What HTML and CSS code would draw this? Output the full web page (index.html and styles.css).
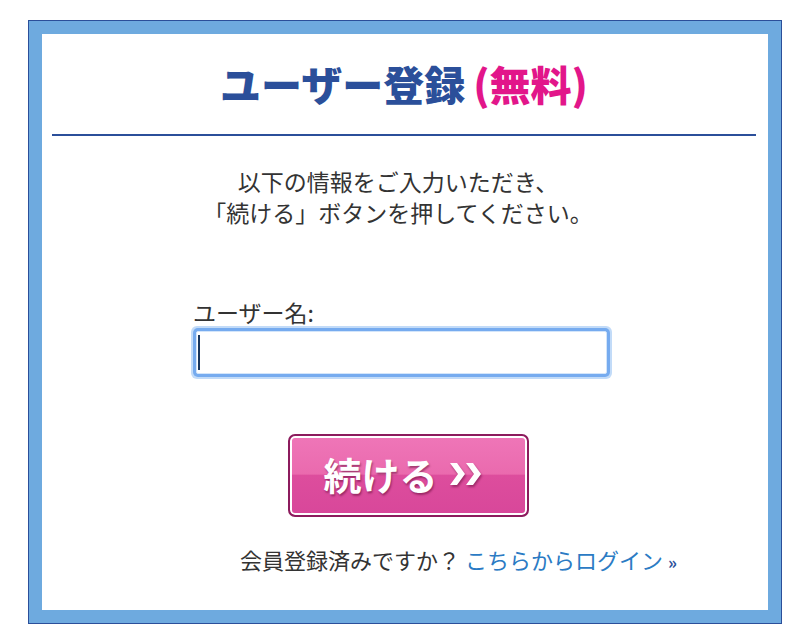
FILE: index.html
```html
<!DOCTYPE html>
<html>
<head>
    <link rel="stylesheet" href="styles.css">
</head>
<body>
    <div class="signup">
        <div class="panel">
            <h1 class="title">ユーザー登録<span class="free">(無料)</span></h1>
            <p class="lead">以下の情報をご入力いただき、<br>「続ける」ボタンを押してください。</p>

            <form class="form">
                <label class="label" for="username">ユーザー名:</label>
                <div class="field">
                    <span class="caret"></span>
                    <input id="username" type="text">
                </div>
                <button class="next" type="button">
                    <span>続ける</span>
                    <svg class="arrows" width="32" height="22" viewBox="0 0 32 22">
                        <polygon points="0,0 7,0 15,11 7,22 0,22 8,11" fill="#fff"/>
                        <polygon points="16,0 23,0 31,11 23,22 16,22 24,11" fill="#fff"/>
                    </svg>
                </button>
            </form>

            <p class="login">会員登録済みですか？ <a href="#">こちらからログイン</a> <span class="raquo">»</span></p>
        </div>
    </div>
</body>
</html>
```

FILE: styles.css
```css
body {
    margin: 0;
    background: #fff;
    color: #333;
    font-family: "Noto Sans CJK JP", "Noto Sans", sans-serif;
}
.signup {
    width: 754px;
    box-sizing: border-box;
    margin: 20px 0 0 28px;
    border: 1px solid #2b4f9a;
    padding: 13px;
    background: #6eaadf;
}
.panel {
    height: 576px;
    box-sizing: border-box;
    padding: 0 12px 0 10px;
    background: #fff;
}
.title {
    margin: 0;
    padding: 24px 0 26px;
    font-size: 41px;
    line-height: 50px;
    font-weight: 900;
    text-align: center;
    color: #2b4f9a;
    border-bottom: 2px solid #2b4f9a;
}
.free {
    margin-left: 8px;
    color: #e2168a;
}
.lead {
    margin: 30px 0 0;
    padding-right: 12px;
    font-size: 23px;
    line-height: 31px;
    text-align: center;
}
.form {
    display: flex;
    flex-direction: column;
    align-items: flex-start;
    margin: 70px 0 0 141px;
}
.label {
    font-size: 23px;
    line-height: 28px;
    margin-bottom: 5px;
}
.field {
    display: flex;
    align-items: center;
    width: 411px;
    height: 43px;
    box-sizing: border-box;
    margin-left: 3px;
    padding-left: 1px;
    border: 1px solid #d3e5fa;
    border-radius: 2px;
    box-shadow: 0 0 0 3px #76abef, 0 0 0 5px #c2dbf8;
    background: #fff;
}
.caret {
    width: 2px;
    height: 35px;
    background: #17345c;
}
.field input {
    flex: 1;
    border: none;
    outline: none;
    background: transparent;
    font: inherit;
    font-size: 22px;
}
.next {
    display: flex;
    align-items: center;
    justify-content: center;
    gap: 12px;
    width: 241px;
    height: 83px;
    margin: 60px 0 0 95px;
    padding: 0 12px 3px 0;
    border: 2px solid #8c1b5d;
    border-radius: 7px;
    box-shadow: inset 0 0 0 2px #fff;
    background: linear-gradient(#ef76b8 0%, #ea6aae 48%, #dd4d9d 50%, #d8479a 100%);
    color: #fff;
    font-family: inherit;
    font-size: 38px;
    font-weight: 700;
    line-height: 1;
    text-shadow: 1px 2px 2px rgba(80, 0, 40, 0.45);
    cursor: pointer;
}
.arrows {
    filter: drop-shadow(1px 2px 1px rgba(80, 0, 40, 0.45));
}
.login {
    margin: 27px 0 0;
    padding-left: 188px;
    font-size: 22px;
    line-height: 30px;
}
.login a {
    color: #2b7bc4;
    text-decoration: none;
}
.raquo {
    color: #2b4f9a;
    font-size: 17px;
    font-weight: 700;
}
```
